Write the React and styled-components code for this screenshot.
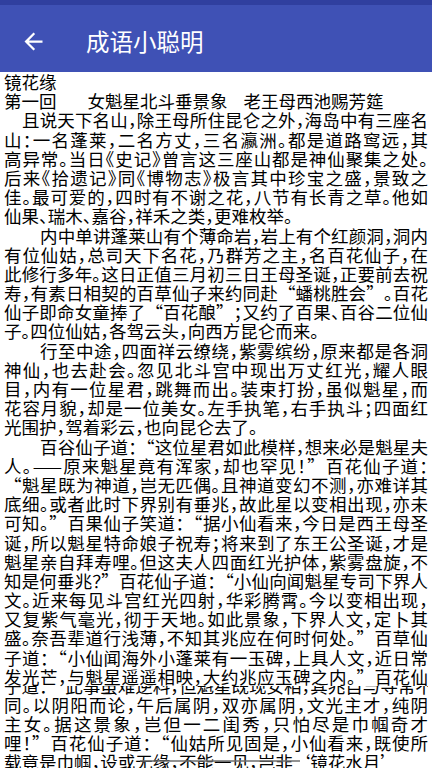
import React from 'react';
import styled, { createGlobalStyle } from 'styled-components';

const Global = createGlobalStyle`
  html, body { margin: 0; padding: 0; background: #fff; overflow: hidden; }
  #root { width: 432px; height: 768px; overflow: hidden; }
`;

const Screen = styled.div`
  position: relative;
  width: 432px;
  height: 768px;
  display: flex;
  flex-direction: column;
  overflow: hidden;
  background: #fff;
`;

const StatusStrip = styled.div`
  flex-shrink: 0;
  height: 5px;
  background: #303f9f;
`;

const AppBar = styled.header`
  flex-shrink: 0;
  height: 67px;
  box-sizing: border-box;
  padding: 5px 0 0 20px;
  display: flex;
  align-items: center;
  background: #3f51b5;
`;

const BackButton = styled.button`
  width: 27px;
  height: 27px;
  padding: 0;
  border: 0;
  background: none;
  display: flex;
  color: #fff;
`;

const Title = styled.h1`
  margin: 0 0 0 39px;
  font-family: "Noto Sans CJK SC", "Noto Sans", sans-serif;
  font-size: 23.5px;
  font-weight: 400;
  color: #fff;
  letter-spacing: 0;
`;

const Article = styled.article`
  flex: 1;
  padding: 0 4px;
  display: flex;
  flex-direction: column;
  font-family: "Noto Sans CJK SC", "Noto Sans", sans-serif;
  color: #000;
`;

const Line = styled.div`
  flex-shrink: 0;
  height: 19.2px;
  line-height: 19.2px;
  font-size: 17.5px;
  white-space: nowrap;
  font-feature-settings: "halt";
  text-spacing-trim: space-all;
  padding-left: ${(p) => p.$indent || 0}px;
  text-align: ${(p) => (p.$justify ? 'justify' : 'left')};
  text-align-last: ${(p) => (p.$justify ? 'justify' : 'left')};
`;

const Wide = styled.span`
  font-feature-settings: normal;
`;

const ChapterRow = styled.div`
  flex-shrink: 0;
  height: 19.2px;
  line-height: 19.2px;
  font-size: 17.5px;
  white-space: nowrap;
  display: flex;
`;

const Seg = styled.span`
  margin-left: ${(p) => p.$gap || 0}px;
`;

const GhostRow = styled.div`
  flex-shrink: 0;
  height: 8.6px;
  overflow: hidden;
`;

const GhostInner = styled(Line)`
  margin-top: -10.4px;
`;

const ScrollMark = styled.div`
  position: absolute;
  left: 140px;
  top: 760px;
  width: 160px;
  height: 2px;
  background: rgba(110, 110, 110, 0.75);
`;

const WIDE_CHARS = '“”‘’—';

function renderText(t) {
  const out = [];
  let buf = '';
  [...t].forEach((ch, i) => {
    if (WIDE_CHARS.includes(ch)) {
      if (buf) out.push(buf);
      buf = '';
      out.push(<Wide key={i}>{ch}</Wide>);
    } else {
      buf += ch;
    }
  });
  if (buf) out.push(buf);
  return out;
}

const before = [
  { t: '且说天下名山，除王母所住昆仑之外，海岛中有三座名', i: 18, j: true },
  { t: '山：一名蓬莱，二名方丈，三名瀛洲。都是道路窎远，其', j: true },
  { t: '高异常。当日《史记》曾言这三座山都是神仙聚集之处。', j: true },
  { t: '后来《拾遗记》同《博物志》极言其中珍宝之盛，景致之', j: true },
  { t: '佳。最可爱的，四时有不谢之花，八节有长青之草。他如', j: true },
  { t: '仙果、瑞木、嘉谷，祥禾之类，更难枚举。' },
  { t: '内中单讲蓬莱山有个薄命岩，岩上有个红颜洞，洞内', i: 36, j: true },
  { t: '有位仙姑，总司天下名花，乃群芳之主，名百花仙子，在', j: true },
  { t: '此修行多年。这日正值三月初三日王母圣诞，正要前去祝', j: true },
  { t: '寿，有素日相契的百草仙子来约同赴“蟠桃胜会”。百花', j: true },
  { t: '仙子即命女童捧了“百花酿”；又约了百果、百谷二位仙', j: true },
  { t: '子。四位仙姑，各驾云头，向西方昆仑而来。' },
  { t: '行至中途，四面祥云缭绕，紫雾缤纷，原来都是各洞', i: 36, j: true },
  { t: '神仙，也去赴会。忽见北斗宫中现出万丈红光，耀人眼', j: true },
  { t: '目，内有一位星君，跳舞而出。装束打扮，虽似魁星，而', j: true },
  { t: '花容月貌，却是一位美女。左手执笔，右手执斗；四面红', j: true },
  { t: '光围护，驾着彩云，也向昆仑去了。' },
  { t: '百谷仙子道：“这位星君如此模样，想来必是魁星夫', i: 36, j: true },
  { t: '人。——原来魁星竟有浑家，却也罕见！”百花仙子道：', j: true },
  { t: '“魁星既为神道，岂无匹偶。且神道变幻不测，亦难详其', j: true },
  { t: '底细。或者此时下界别有垂兆，故此星以变相出现，亦未', j: true },
  { t: '可知。”百果仙子笑道：“据小仙看来，今日是西王母圣', j: true },
  { t: '诞，所以魁星特命娘子祝寿；将来到了东王公圣诞，才是', j: true },
  { t: '魁星亲自拜寿哩。但这夫人四面红光护体，紫雾盘旋，不', j: true },
  { t: '知是何垂兆？”百花仙子道：“小仙向闻魁星专司下界人', j: true },
  { t: '文。近来每见斗宫红光四射，华彩腾霄。今以变相出现，', j: true },
  { t: '又复紫气毫光，彻于天地。如此景象，下界人文，定卜其', j: true },
  { t: '盛。奈吾辈道行浅薄，不知其兆应在何时何处。”百草仙', j: true },
  { t: '子道：“小仙闻海外小蓬莱有一玉碑，上具人文，近日常', j: true },
  { t: '发光芒，与魁星遥遥相映，大约兆应玉碑之内。”百花仙', j: true },
];

const ghost = '子道：“此事虽难逆料，但魁星既现女相，其兆自与寻常不';

const after = [
  { t: '同。以阴阳而论，午后属阴，双亦属阴，文光主才，纯阴', j: true },
  { t: '主女。据这景象，岂但一二闺秀，只怕尽是巾帼奇才', j: true },
  { t: '哩！”百花仙子道：“仙姑所见固是，小仙看来，既使所', j: true },
  { t: '载竟是巾帼，设或无缘，不能一见，岂非‘镜花水月’' },
];

function ArrowBack() {
  return (
    <svg width="27" height="27" viewBox="0 0 24 24" fill="currentColor">
      <path d="M20 11H7.83l5.59-5.59L12 4l-8 8 8 8 1.41-1.41L7.83 13H20v-2z" />
    </svg>
  );
}

export default function App() {
  return (
    <Screen>
      <Global />
      <StatusStrip />
      <AppBar>
        <BackButton aria-label="返回">
          <ArrowBack />
        </BackButton>
        <Title>成语小聪明</Title>
      </AppBar>
      <Article>
        <Line>镜花缘</Line>
        <ChapterRow>
          <Seg>第一回</Seg>
          <Seg $gap={31}>女魁星北斗垂景象</Seg>
          <Seg $gap={16}>老王母西池赐芳筵</Seg>
        </ChapterRow>
        {before.map((l, k) => (
          <Line key={k} $indent={l.i} $justify={l.j}>
            {renderText(l.t)}
          </Line>
        ))}
        <GhostRow aria-hidden="true">
          <GhostInner $justify>{renderText(ghost)}</GhostInner>
        </GhostRow>
        {after.map((l, k) => (
          <Line key={k} $indent={l.i} $justify={l.j}>
            {renderText(l.t)}
          </Line>
        ))}
      </Article>
      <ScrollMark />
    </Screen>
  );
}
